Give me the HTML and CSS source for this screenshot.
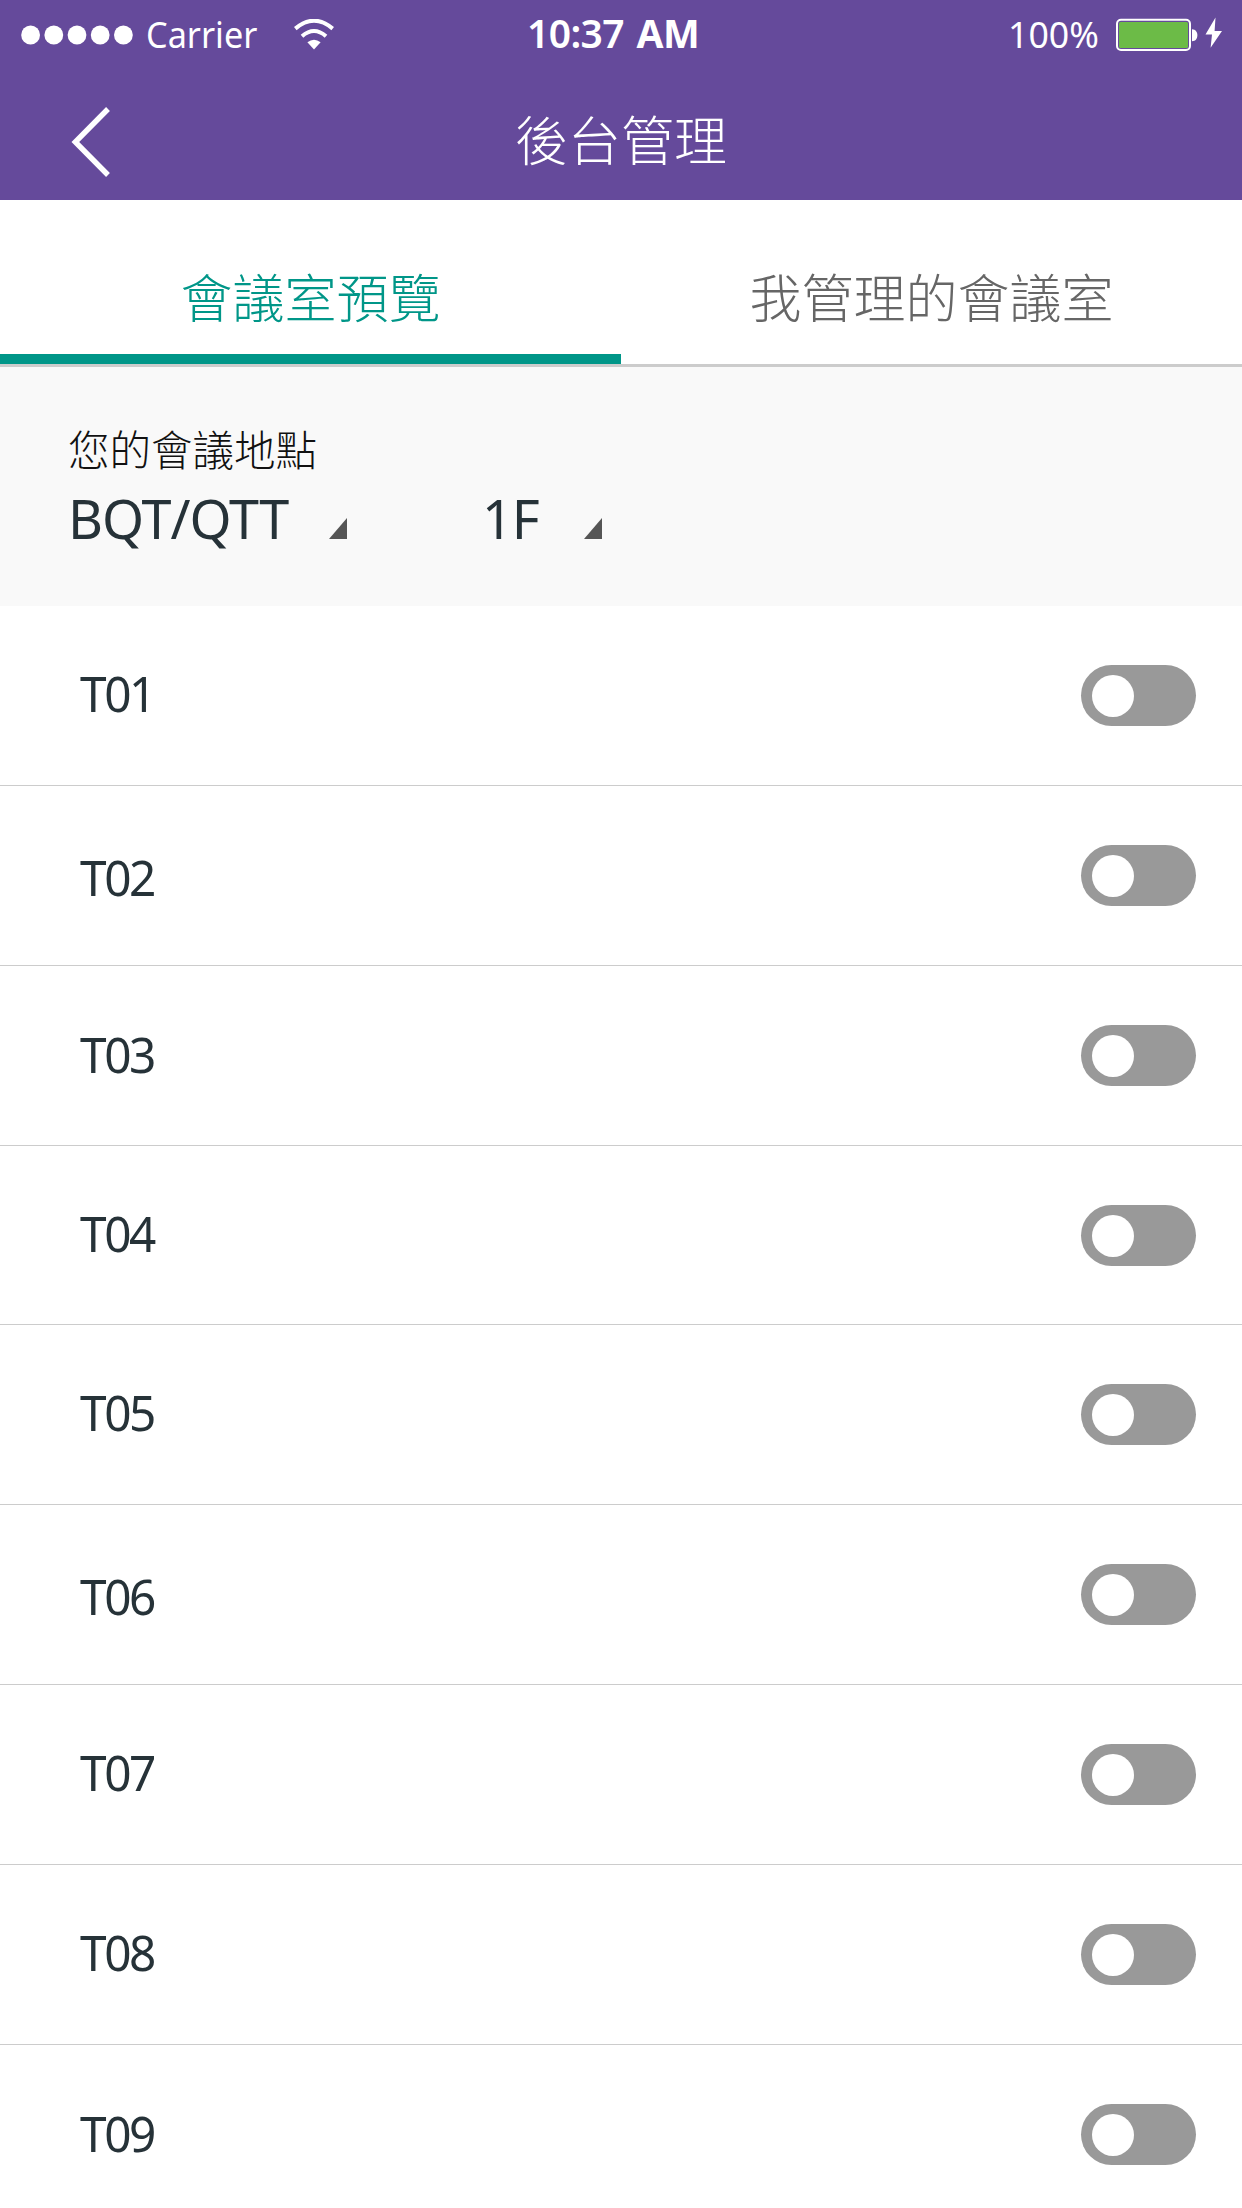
FILE: index.html
```html
<!DOCTYPE html>
<html lang="zh-Hant">
<head>
<meta charset="utf-8">
<title>後台管理</title>
<link rel="stylesheet" href="styles.css">
</head>
<body>
<header class="header">
  <div class="status">
    <div class="status-left">
      <svg class="signal" width="113" height="20" viewBox="0 0 113 20" fill="#fff"><circle cx="9.6" cy="10" r="9.4"/><circle cx="32.8" cy="10" r="9.4"/><circle cx="56" cy="10" r="9.4"/><circle cx="79.2" cy="10" r="9.4"/><circle cx="102.4" cy="10" r="9.4"/></svg>
      <span class="carrier">Carrier</span>
      <svg class="wifi" width="40" height="31" viewBox="0 0 40 31"><g fill="none" stroke="#fff" stroke-width="4"><path d="M1.3 9.6Q20-6.2 38.7 9.6"/><path d="M8 17.2Q20 6.8 32 17.2"/></g><path d="M13.4 23.3Q20 18.2 26.6 23.3L20 30.5Z" fill="#fff"/></svg>
    </div>
    <div class="time">10:37 <b>AM</b></div>
    <div class="status-right">
      <span class="percent">100%</span>
      <svg class="battery" width="107" height="35" viewBox="0 0 107 35"><rect x="1" y="2.8" width="73" height="30.2" rx="4" fill="none" stroke="#fff" stroke-width="2"/><rect x="3" y="5" width="69" height="26" rx="1.5" fill="#6cbb47"/><path d="M76 12.3C83.2 12.3 83.2 24.3 76 24.3Z" fill="#fff"/><path d="M99.5.5L89.5 17.6H96L94.6 30.8L106 14H98.6Z" fill="#fff"/></svg>
    </div>
  </div>
  <div class="titlebar">
    <svg class="back" width="40" height="72" viewBox="0 0 40 72" fill="none" stroke="#fff" stroke-width="5.4"><path d="M37 3L4.3 36L37 69"/></svg>
    <h1 class="title">後台管理</h1>
  </div>
</header>
<nav class="tabs">
  <div class="tab active"><span>會議室預覽</span></div>
  <div class="tab"><span>我管理的會議室</span></div>
</nav>
<section class="filter">
  <div class="label">您的會議地點</div>
  <div class="selects">
    <div class="select site"><span>BQT/QTT</span><i class="caret"></i></div>
    <div class="select floor"><span>1F</span><i class="caret"></i></div>
  </div>
</section>
<ul class="rooms">
  <li class="room"><span class="name">T01</span><span class="switch"></span></li>
  <li class="room low"><span class="name">T02</span><span class="switch"></span></li>
  <li class="room"><span class="name">T03</span><span class="switch"></span></li>
  <li class="room"><span class="name">T04</span><span class="switch"></span></li>
  <li class="room"><span class="name">T05</span><span class="switch"></span></li>
  <li class="room low"><span class="name">T06</span><span class="switch"></span></li>
  <li class="room"><span class="name">T07</span><span class="switch"></span></li>
  <li class="room"><span class="name">T08</span><span class="switch"></span></li>
  <li class="room"><span class="name">T09</span><span class="switch"></span></li>
</ul>
</body>
</html>
```
FILE: styles.css
```css
* { box-sizing: border-box; margin: 0; padding: 0; }
body { width: 1242px; height: 2208px; overflow: hidden; background: #fff; font-family: "Noto Sans", "Noto Sans CJK TC", sans-serif; }
svg { display: block; flex: none; }
span, .time, .title, .label { white-space: nowrap; }

.header { height: 200px; background: #654a9b; color: #fff; }
.status { height: 70px; display: grid; grid-template-columns: 500px 1fr 500px; }
.status-left { display: flex; padding-left: 21px; }
.signal { margin-top: 25px; }
.carrier { width: 148px; margin-left: 12px; padding-top: 9px; font-size: 37px; line-height: 50px; transform: scaleX(.925); transform-origin: left; }
.wifi { margin-top: 19px; }
.time { padding-top: 7px; padding-left: 27px; font-size: 39px; line-height: 52px; font-weight: 600; letter-spacing: -.6px; word-spacing: 3px; }
.time b { font-weight: 700; }
.status-right { display: flex; padding-left: 266px; }
.percent { width: 108px; padding-top: 9px; font-size: 37px; line-height: 50px; transform: scaleX(.965); transform-origin: left; }
.battery { margin-top: 17px; }
.titlebar { height: 130px; display: grid; grid-template-columns: 200px 1fr 200px; }
.back { margin: 36px 0 0 71px; }
.title { font-family: "Noto Sans CJK TC", sans-serif; font-weight: 300; font-size: 53px; line-height: 76px; padding-top: 30px; text-align: center; }

.tabs { height: 167px; display: grid; grid-template-columns: 621px 621px; border-bottom: 3px solid #ccc; }
.tab { display: flex; justify-content: center; padding-top: 59px; font-family: "Noto Sans CJK TC", sans-serif; font-weight: 300; font-size: 52px; line-height: 74px; color: #666; }
.tab.active { color: #009688; border-bottom: 10px solid #009688; }

.filter { height: 239px; background: #f9f9f9; padding: 52px 0 0 68px; }
.label { font-family: "Noto Sans CJK TC", sans-serif; font-weight: 300; font-size: 41.5px; line-height: 58px; color: #111; }
.selects { display: flex; padding-top: 3px; font-size: 55px; line-height: 76px; color: #263238; }
.select { display: flex; }
.select span { letter-spacing: -1px; transform: scaleX(.98); transform-origin: left; }
.site { width: 414px; }
.site span { width: 261px; }
.floor span { width: 102px; }
.caret { width: 18px; height: 21px; margin-top: 38px; background: #555; clip-path: polygon(100% 0, 100% 100%, 0 100%); }

.rooms { list-style: none; }
.room { height: 179.85px; display: flex; justify-content: space-between; padding: 59px 46px 0 80px; border-bottom: 1.5px solid #ccc; }
.name { margin-top: -2px; font-size: 50px; line-height: 60px; letter-spacing: -2.5px; color: #263238; transform: scaleX(.955); transform-origin: left; }
.room:nth-child(6n + 3) .name { margin-top: -1px; }
.low .name { padding-top: 4px; }
.switch { width: 115px; height: 61px; border-radius: 31px; background: #999; padding: 10px 11px; }
.switch::before { content: ""; display: block; width: 42px; height: 42px; border-radius: 50%; background: #fff; }
```
